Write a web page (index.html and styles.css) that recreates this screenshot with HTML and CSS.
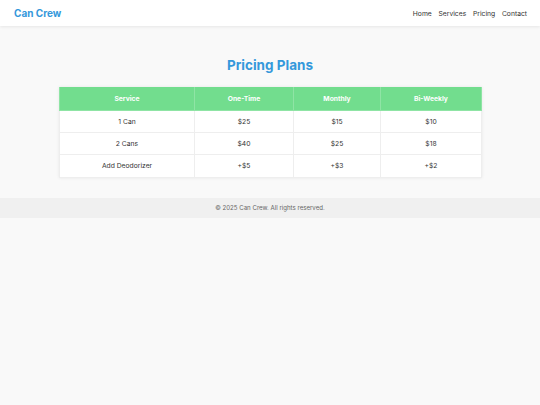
FILE: index.html
```html
<!DOCTYPE html>
<html>
<head>
<meta charset="utf-8">
<link rel="stylesheet" href="styles.css">
</head>
<body>
<header class="site-header">
  <div class="logo">Can Crew</div>
  <nav class="nav">
    <a href="#">Home</a>
    <a href="#">Services</a>
    <a href="#">Pricing</a>
    <a href="#">Contact</a>
  </nav>
</header>
<main class="main">
  <h1 class="title">Pricing Plans</h1>
  <table class="pricing">
    <colgroup>
      <col class="c1"><col class="c2"><col class="c3"><col class="c4">
    </colgroup>
    <thead>
      <tr><th>Service</th><th>One-Time</th><th>Monthly</th><th>Bi-Weekly</th></tr>
    </thead>
    <tbody>
      <tr><td>1 Can</td><td>$25</td><td>$15</td><td>$10</td></tr>
      <tr><td>2 Cans</td><td>$40</td><td>$25</td><td>$18</td></tr>
      <tr><td>Add Deodorizer</td><td>+$5</td><td>+$3</td><td>+$2</td></tr>
    </tbody>
  </table>
</main>
<footer class="footer">© 2025 Can Crew. All rights reserved.</footer>
</body>
</html>
```

FILE: styles.css
```css
* { box-sizing: border-box; }
html, body { margin: 0; padding: 0; }
body {
  background: #f9f9f9;
  font-family: Inter, "Liberation Sans", sans-serif;
  color: #333;
}
.site-header {
  background: #fff;
  height: 26px;
  display: flex;
  align-items: center;
  justify-content: space-between;
  padding: 0 13px 0 14px;
  box-shadow: 0 1px 3px rgba(0,0,0,0.08);
}
.logo {
  font-size: 10px;
  font-weight: 700;
  color: #3498db;
}
.nav { display: flex; gap: 6.75px; }
.nav a {
  font-size: 6.75px;
  color: #333;
  text-decoration: none;
}
.main {
  padding: 31px 59px 20px;
}
.title {
  margin: 0 0 13px;
  text-align: center;
  font-size: 13.5px;
  font-weight: 700;
  color: #3498db;
  line-height: 17px;
}
.pricing {
  width: 422px;
  border-collapse: collapse;
  background: #fff;
  box-shadow: 0 0 3px rgba(0,0,0,0.08);
  table-layout: fixed;
}
.c1 { width: 135px; }
.c2 { width: 99px; }
.c3 { width: 87px; }
.c4 { width: 101px; }
.pricing th, .pricing td {
  text-align: center;
  font-size: 6.75px;
  border: 1px solid #eee;
}
.pricing th {
  background: #72dd8e;
  color: #fff;
  font-weight: 700;
  height: 23px;
  border-color: #8fe4a5;
  border-top: none;
}
.pricing td {
  height: 22.4px;
  color: #333;
}
.footer {
  background: #f0f0f0;
  height: 20px;
  line-height: 20px;
  text-align: center;
  font-size: 6.1px;
  color: #666;
}
```
